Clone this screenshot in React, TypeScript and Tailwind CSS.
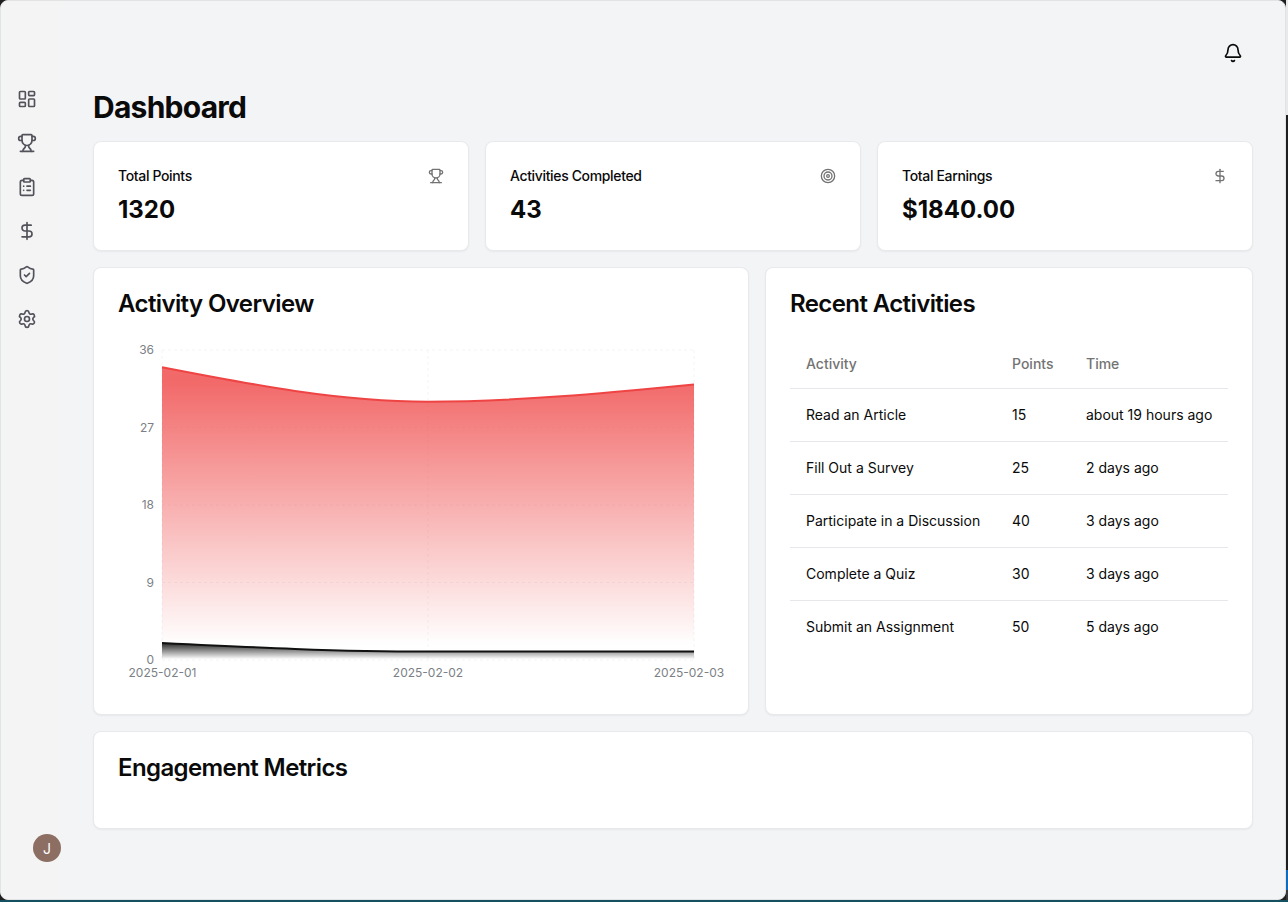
import React from "react";
import { LayoutDashboard, Trophy, ClipboardList, DollarSign, ShieldCheck, Settings, Bell, Target } from "lucide-react";

const nav = [LayoutDashboard, Trophy, ClipboardList, DollarSign, ShieldCheck, Settings];
const stats = [
  { label: "Total Points", value: "1320", Icon: Trophy },
  { label: "Activities Completed", value: "43", Icon: Target },
  { label: "Total Earnings", value: "$1840.00", Icon: DollarSign },
];
const rows = [
  ["Read an Article", "15", "about 19 hours ago"],
  ["Fill Out a Survey", "25", "2 days ago"],
  ["Participate in a Discussion", "40", "3 days ago"],
  ["Complete a Quiz", "30", "3 days ago"],
  ["Submit an Assignment", "50", "5 days ago"],
];

const card = "bg-white rounded-[8px] border border-[#e8e9ec] shadow-[0_1px_2px_rgba(0,0,0,0.05)]";

function Chart() {
  const ox = 118;
  const oy = 340;
  const X = (x: number) => x - ox;
  const Y = (y: number) => y - oy;
  const red = `M${X(162)},${Y(367.2)} C${X(250.67)},${Y(384.45)} ${X(339.33)},${Y(401.7)} ${X(428)},${Y(401.7)} C${X(516.67)},${Y(401.7)} ${X(605.33)},${Y(393.05)} ${X(694)},${Y(384.4)}`;
  const blk = `M${X(162)},${Y(643)} C${X(250.67)},${Y(647.3)} ${X(339.33)},${Y(651.6)} ${X(428)},${Y(651.6)} L${X(694)},${Y(651.6)}`;
  const close = ` L${X(694)},${Y(660)} L${X(162)},${Y(660)} Z`;
  const ticks: [string, number, number][] = [["36", 350, 354], ["27", 427.5, 432], ["18", 505, 509], ["9", 582.5, 587], ["0", 660, 664]];
  return (
    <svg width={610} height={350} className="block">
      <defs>
        <linearGradient id="redFill" x1="0" y1="0" x2="0" y2="1">
          <stop offset="5%" stopColor="#ef4444" stopOpacity={0.8} />
          <stop offset="95%" stopColor="#ef4444" stopOpacity={0} />
        </linearGradient>
        <linearGradient id="blkFill" x1="0" y1="0" x2="0" y2="1">
          <stop offset="5%" stopColor="#000000" stopOpacity={0.8} />
          <stop offset="95%" stopColor="#000000" stopOpacity={0} />
        </linearGradient>
      </defs>
      <g stroke="#f3f4f6" strokeDasharray="3 3" fill="none">
        {ticks.map(([t, y]) => (
          <line key={t} x1={X(162)} x2={X(694)} y1={Y(y)} y2={Y(y)} />
        ))}
        {[162, 428, 694].map((x) => (
          <line key={x} x1={X(x)} x2={X(x)} y1={Y(350)} y2={Y(660)} />
        ))}
      </g>
      <path d={red + close} fill="url(#redFill)" />
      <path d={red} fill="none" stroke="#ef4444" strokeWidth={2} />
      <path d={blk + close} fill="url(#blkFill)" />
      <path d={blk} fill="none" stroke="#111111" strokeWidth={2} />
      <g fontSize={12} fill="#7c7f86" fontFamily="Inter, sans-serif">
        {ticks.map(([t, , ty]) => (
          <text key={t} x={X(154)} y={Y(ty)} textAnchor="end">{t}</text>
        ))}
        <text x={X(162.5)} y={Y(677)} textAnchor="middle">2025-02-01</text>
        <text x={X(428)} y={Y(677)} textAnchor="middle">2025-02-02</text>
        <text x={X(689)} y={Y(677)} textAnchor="middle">2025-02-03</text>
      </g>
    </svg>
  );
}

export default function App() {
  return (
    <div className="w-[1288px] h-[902px] flex flex-col bg-[#1f1f1f] overflow-hidden font-['Inter',sans-serif]">
      <div className="flex h-[900px]">
        <div className="w-[1286px] h-[900px] flex rounded-[8px] border border-[#e2e3e5] bg-[#f3f4f6] overflow-hidden">
          <aside className="w-[60px] shrink-0 bg-[#f4f4f5] flex flex-col justify-between pt-[88px] pb-[37px] pl-[16px] pr-0">
            <nav className="flex flex-col gap-[24px]">
              {nav.map((I, i) => (
                <I key={i} size={20} color="#52525b" strokeWidth={2} />
              ))}
            </nav>
            <div className="self-end w-[28px] h-[28px] rounded-full bg-[#8d6e63] text-white text-[14px] flex items-center justify-center">J</div>
          </aside>
          <main className="flex-1 min-w-0 pl-[32px] pr-[32px]">
            <div className="h-[88px] flex justify-end pt-[42px] pr-[10px]">
              <Bell size={20} color="#0a0a0a" strokeWidth={2} />
            </div>
            <h1 className="text-[30px] leading-[36px] font-bold tracking-[-0.75px] text-[#0a0a0a] h-[52px]">Dashboard</h1>
            <div className="grid grid-cols-3 gap-[16px]">
              {stats.map(({ label, value, Icon }) => (
                <div key={label} className={`${card} h-[110px] px-[24px] pt-[24px]`}>
                  <div className="flex justify-between items-start h-[20px]">
                    <span className="text-[14px] leading-[20px] font-medium tracking-tight text-[#0a0a0a]">{label}</span>
                    <Icon size={16} color="#737373" strokeWidth={2} className="mt-[2px]" />
                  </div>
                  <div className="mt-[8px] text-[24px] leading-[32px] font-bold text-[#0a0a0a]">{value}</div>
                </div>
              ))}
            </div>
            <div className="flex gap-[16px] mt-[16px]">
              <div className={`${card} w-[656px] h-[448px] px-[24px] pt-[24px]`}>
                <h2 className="text-[24px] leading-[24px] font-semibold tracking-[-0.6px] text-[#0a0a0a] h-[48px]">Activity Overview</h2>
                <Chart />
              </div>
              <div className={`${card} flex-1 h-[448px] px-[24px] pt-[24px]`}>
                <h2 className="text-[24px] leading-[24px] font-semibold tracking-[-0.6px] text-[#0a0a0a] h-[47px]">Recent Activities</h2>
                <table className="w-[438px] table-fixed text-[14px] text-left">
                  <colgroup>
                    <col className="w-[206px]" />
                    <col className="w-[74px]" />
                    <col className="w-[158px]" />
                  </colgroup>
                  <thead>
                    <tr className="h-[49px] border-b border-[#e5e7eb] text-[#737373]">
                      <th className="pl-[16px] font-medium">Activity</th>
                      <th className="pl-[16px] font-medium">Points</th>
                      <th className="pl-[16px] font-medium">Time</th>
                    </tr>
                  </thead>
                  <tbody className="text-[#0a0a0a]">
                    {rows.map((r, i) => (
                      <tr key={r[0]} className={`h-[53px] ${i < rows.length - 1 ? "border-b border-[#e5e7eb]" : ""}`}>
                        {r.map((c) => (
                          <td key={c} className="pl-[16px] whitespace-nowrap">{c}</td>
                        ))}
                      </tr>
                    ))}
                  </tbody>
                </table>
              </div>
            </div>
            <div className={`${card} h-[98px] mt-[16px] px-[24px] pt-[24px]`}>
              <h2 className="text-[24px] leading-[24px] font-semibold tracking-[-0.6px] text-[#0a0a0a]">Engagement Metrics</h2>
            </div>
          </main>
        </div>
        <div className="flex-1 flex flex-col">
          <div className="h-[115px] bg-[#e9e9ea]" />
          <div className="flex-1 bg-[#1f1f1f]" />
          <div className="h-[20px] bg-[#0f6cbd]" />
          <div className="h-[10px] bg-[#3a3a3a]" />
        </div>
      </div>
      <div className="flex-1 bg-[#14505f]" />
    </div>
  );
}
